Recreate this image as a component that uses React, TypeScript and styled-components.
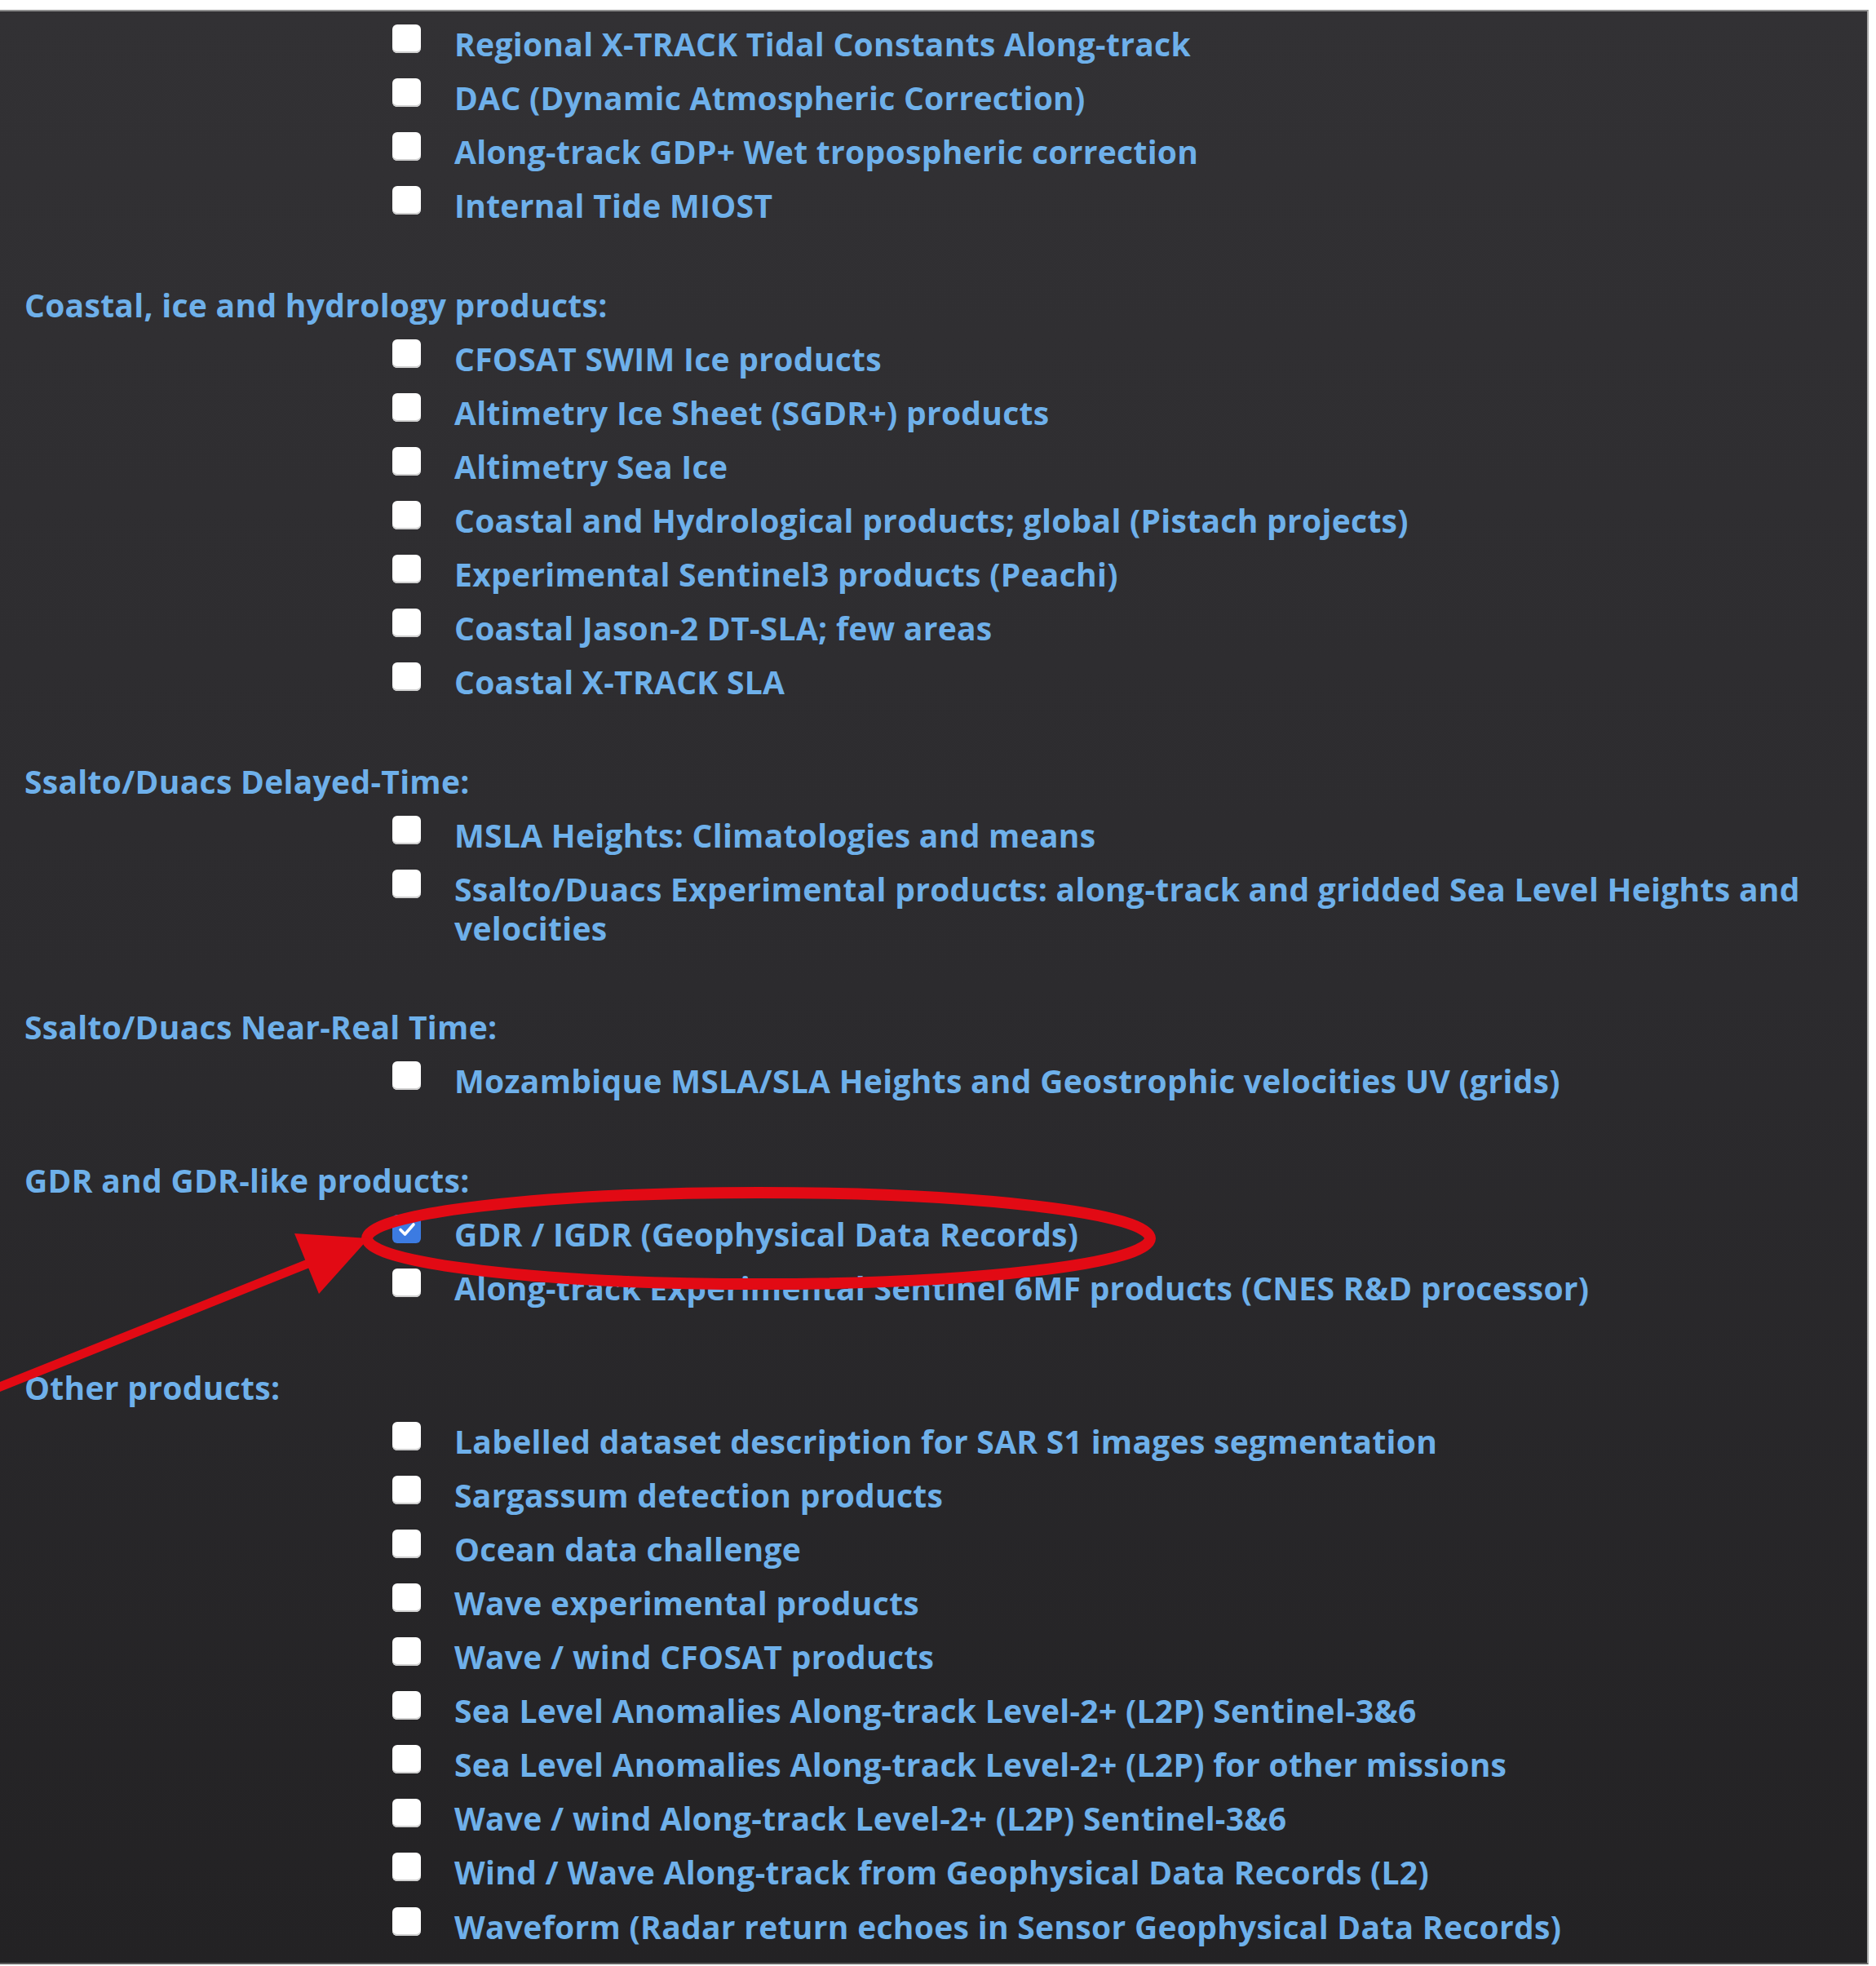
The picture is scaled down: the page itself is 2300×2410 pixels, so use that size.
import React from "react";
import styled, { createGlobalStyle } from "styled-components";

const GlobalStyle = createGlobalStyle`
  html, body { margin: 0; padding: 0; background: #ffffff; }
  body { font-family: "Open Sans", "Liberation Sans", sans-serif; }
`;

const Page = styled.div`
  position: relative;
  width: 2300px;
  padding-top: 12px;
`;

const Panel = styled.main`
  box-sizing: border-box;
  display: flex;
  flex-direction: column;
  gap: 73.8px;
  width: 2291px;
  height: 2396px;
  border-top: 2px solid #8e8e8e;
  border-right: 2px solid #a9a9a9;
  border-bottom: 2px solid #5e5e5e;
  background: linear-gradient(180deg, #323134 0%, #2c2b2e 50%, #232224 100%);
  padding-top: 16px;
  overflow: hidden;
`;

const Group = styled.section`
  display: flex;
  flex-direction: column;
  gap: 18.4px;
`;

const Heading = styled.h3`
  margin: 0;
  padding-left: 30px;
  font-size: 39px;
  font-weight: 700;
  letter-spacing: 0.3px;
  line-height: 47.7px;
  color: #6eb0ea;
  white-space: nowrap;
`;

const List = styled.ul`
  display: flex;
  flex-direction: column;
  gap: 18.4px;
  list-style: none;
  margin: 0;
  padding: 0;
`;

const Item = styled.li`
  display: flex;
  align-items: flex-start;
  padding-left: 481px;
`;

const Box = styled.span<{ $checked?: boolean }>`
  flex: none;
  box-sizing: border-box;
  width: 35px;
  height: 35px;
  margin-right: 41px;
  border-radius: 6px;
  background: ${(p) => (p.$checked ? "#3c7be2" : "#ffffff")};
  box-shadow: ${(p) => (p.$checked ? "none" : "inset 0 -2px 0 #cfcfcf")};
  display: flex;
  align-items: center;
  justify-content: center;
`;

const Label = styled.a`
  font-size: 39px;
  font-weight: 700;
  letter-spacing: 0.3px;
  line-height: 47.7px;
  color: #6eb0ea;
  text-decoration: none;
  white-space: nowrap;
`;

const Overlay = styled.svg`
  position: absolute;
  left: 0;
  top: 0;
  width: 2300px;
  height: 2410px;
  pointer-events: none;
`;

type Entry = { label: React.ReactNode; checked?: boolean };
type Section = { title?: string; items: Entry[] };

const sections: Section[] = [
  {
    items: [
      { label: "Regional X-TRACK Tidal Constants Along-track" },
      { label: "DAC (Dynamic Atmospheric Correction)" },
      { label: "Along-track GDP+ Wet tropospheric correction" },
      { label: "Internal Tide MIOST" },
    ],
  },
  {
    title: "Coastal, ice and hydrology products:",
    items: [
      { label: "CFOSAT SWIM Ice products" },
      { label: "Altimetry Ice Sheet (SGDR+) products" },
      { label: "Altimetry Sea Ice" },
      { label: "Coastal and Hydrological products; global (Pistach projects)" },
      { label: "Experimental Sentinel3 products (Peachi)" },
      { label: "Coastal Jason-2 DT-SLA; few areas" },
      { label: "Coastal X-TRACK SLA" },
    ],
  },
  {
    title: "Ssalto/Duacs Delayed-Time:",
    items: [
      { label: "MSLA Heights: Climatologies and means" },
      {
        label: (
          <>
            Ssalto/Duacs Experimental products: along-track and gridded Sea Level Heights and
            <br />
            velocities
          </>
        ),
      },
    ],
  },
  {
    title: "Ssalto/Duacs Near-Real Time:",
    items: [{ label: "Mozambique MSLA/SLA Heights and Geostrophic velocities UV (grids)" }],
  },
  {
    title: "GDR and GDR-like products:",
    items: [
      { label: "GDR / IGDR (Geophysical Data Records)", checked: true },
      { label: "Along-track Experimental Sentinel 6MF products (CNES R&D processor)" },
    ],
  },
  {
    title: "Other products:",
    items: [
      { label: "Labelled dataset description for SAR S1 images segmentation" },
      { label: "Sargassum detection products" },
      { label: "Ocean data challenge" },
      { label: "Wave experimental products" },
      { label: "Wave / wind CFOSAT products" },
      { label: "Sea Level Anomalies Along-track Level-2+ (L2P) Sentinel-3&6" },
      { label: "Sea Level Anomalies Along-track Level-2+ (L2P) for other missions" },
      { label: "Wave / wind Along-track Level-2+ (L2P) Sentinel-3&6" },
      { label: "Wind / Wave Along-track from Geophysical Data Records (L2)" },
      { label: "Waveform (Radar return echoes in Sensor Geophysical Data Records)" },
    ],
  },
];

function Check() {
  return (
    <svg width="24" height="24" viewBox="0 0 24 24">
      <path d="M4 12.5 L9.5 18 L20 6" fill="none" stroke="#ffffff" strokeWidth="3.6" strokeLinecap="round" strokeLinejoin="round" />
    </svg>
  );
}

export default function App() {
  return (
    <Page>
      <GlobalStyle />
      <Panel>
        {sections.map((s, i) => (
          <Group key={i}>
            {s.title && <Heading>{s.title}</Heading>}
            <List>
              {s.items.map((it, j) => (
                <Item key={j}>
                  <Box $checked={it.checked}>{it.checked && <Check />}</Box>
                  <Label href="#">{it.label}</Label>
                </Item>
              ))}
            </List>
          </Group>
        ))}
      </Panel>
      <Overlay viewBox="0 0 2300 2410">
        <ellipse cx="930" cy="1518" rx="480" ry="56" fill="none" stroke="#e20a14" strokeWidth="14" />
        <line x1="-10" y1="1704" x2="385" y2="1546" stroke="#e20a14" strokeWidth="11" />
        <polygon points="452,1518 391,1586 361,1512" fill="#e20a14" />
      </Overlay>
    </Page>
  );
}
